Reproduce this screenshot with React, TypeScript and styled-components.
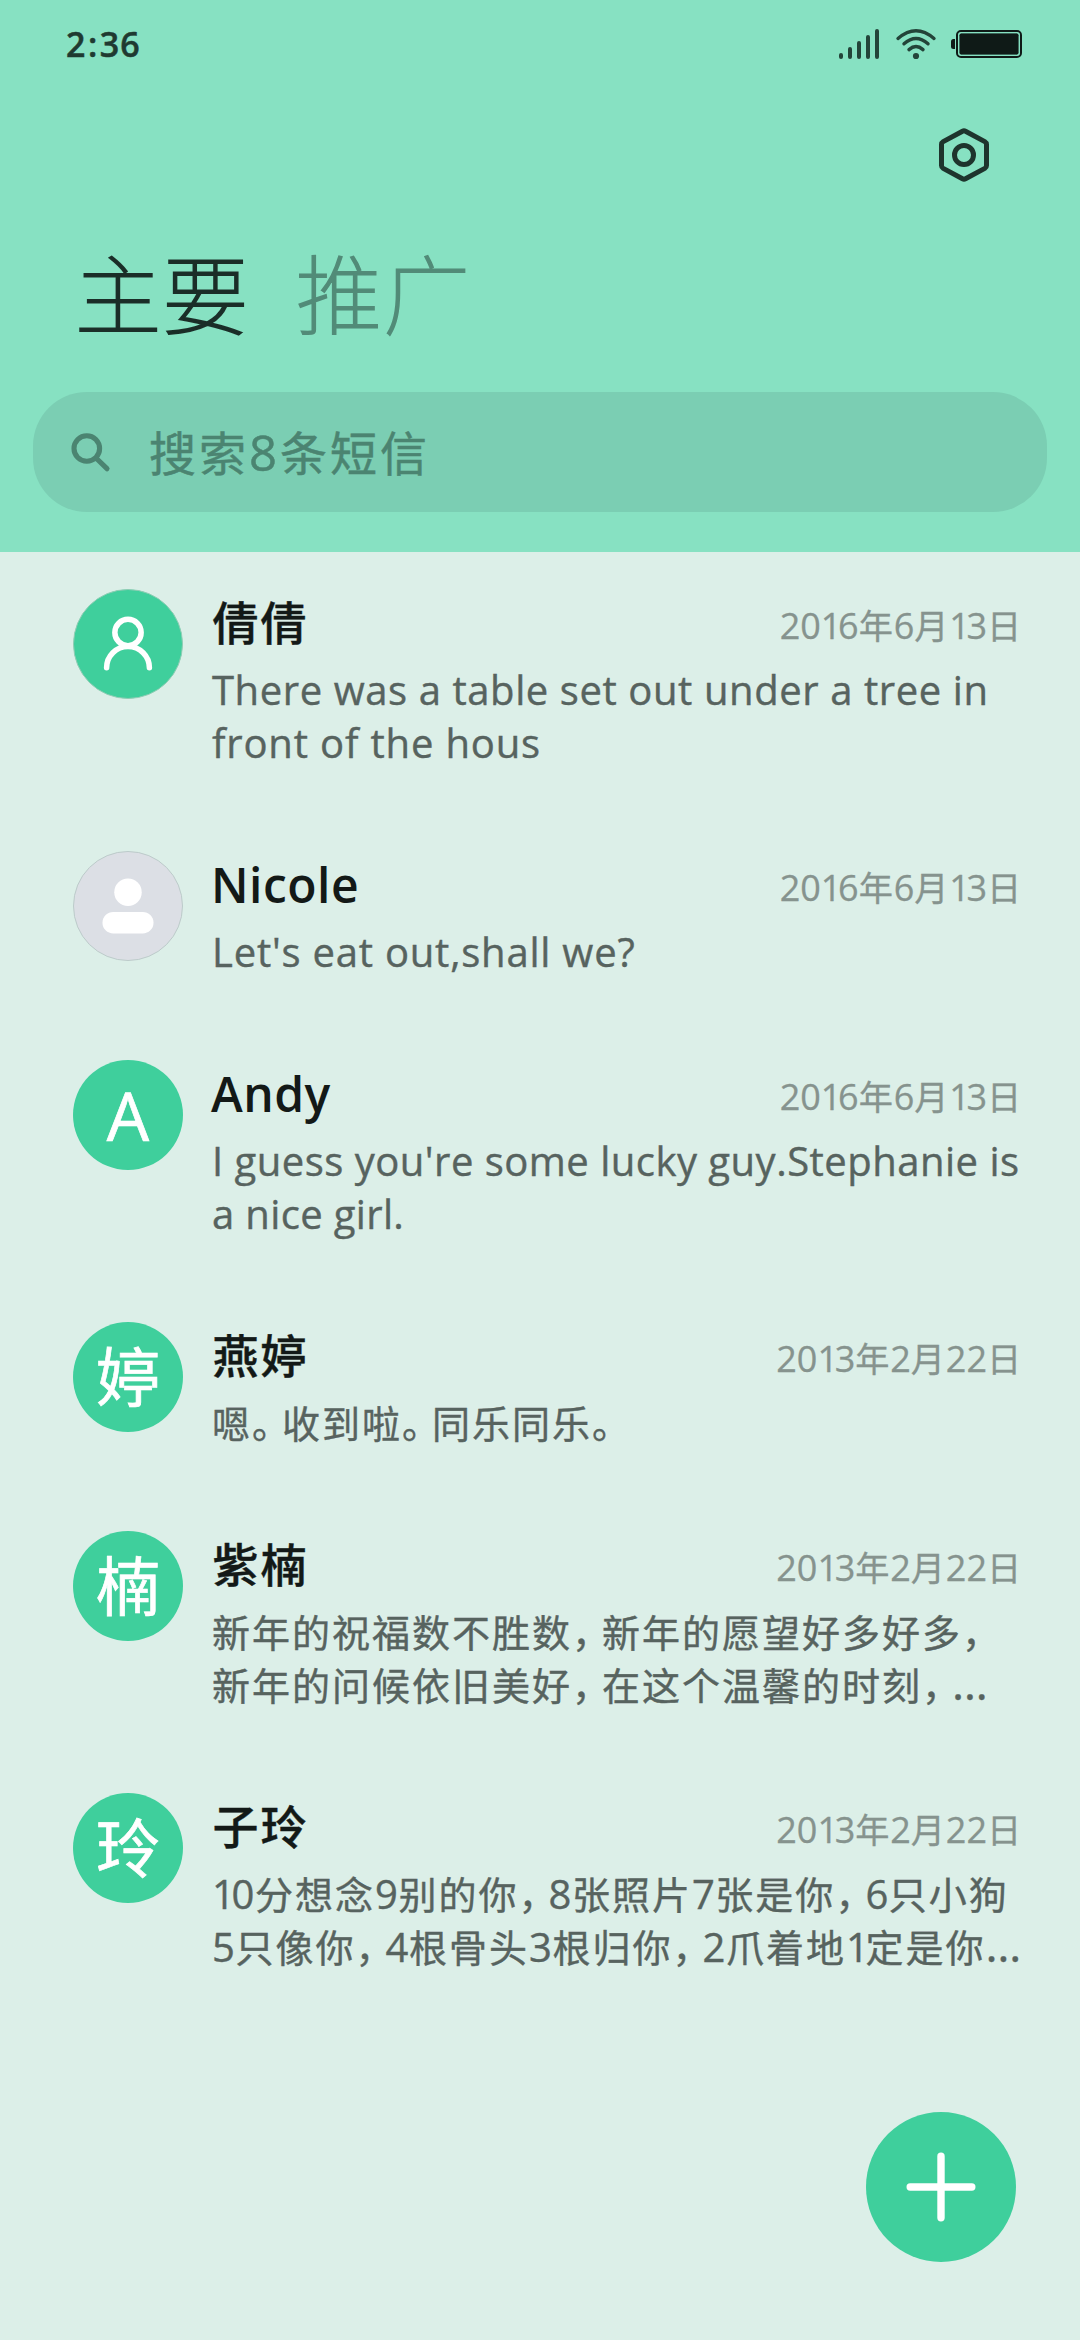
import React from "react";
import styled, { createGlobalStyle, css } from "styled-components";

const FONT = `"Open Sans", "Noto Sans CJK SC", sans-serif`;

const GlobalStyle = createGlobalStyle`
  body { margin: 0; background: #dcefe8; }
  * { box-sizing: border-box; }
`;

const Screen = styled.div`
  position: relative;
  width: 1080px;
  height: 2340px;
  overflow: hidden;
  background: #dcefe8;
  font-family: ${FONT};
`;

const Header = styled.header`
  display: flex;
  flex-direction: column;
  height: 552px;
  background: #87e1c2;
`;

const StatusBar = styled.div`
  display: flex;
  justify-content: space-between;
  align-items: center;
  height: 88px;
  padding: 0 58px 0 66px;
`;

const Clock = styled.span`
  font-size: 34px;
  line-height: 40px;
  font-weight: 600;
  letter-spacing: 1px;
  color: #1f3a31;
  -webkit-text-stroke: 0.5px currentColor;
`;

const Colon = styled.span`
  margin: 0 1.5px;
`;

const StatusIcons = styled.svg`
  display: block;
  width: 184px;
  height: 88px;
`;

const Toolbar = styled.div`
  display: flex;
  justify-content: flex-end;
  align-items: center;
  height: 134px;
  padding-right: 88px;
`;

const IconButton = styled.button`
  display: flex;
  padding: 0;
  border: 0;
  background: none;
`;

const Tabs = styled.nav`
  display: flex;
  gap: 46px;
  height: 170px;
  padding: 19px 0 0 75px;
`;

const Tab = styled.span<{ $active?: boolean }>`
  font-size: 86px;
  line-height: 108px;
  font-weight: 100;
  letter-spacing: 1.5px;
  color: ${(p) => (p.$active ? "#1b2e28" : "#528b78")};
  -webkit-text-stroke: 2px currentColor;
`;

const SearchBar = styled.div`
  display: flex;
  align-items: center;
  height: 120px;
  margin: 0 33px;
  padding-left: 36px;
  border-radius: 54px;
  background: #7bceb3;
`;

const SearchText = styled.span`
  margin-left: 38px;
  padding-top: 2px;
  font-size: 47px;
  line-height: 60px;
  letter-spacing: 3px;
  color: #4b8471;
  -webkit-text-stroke: 0.5px currentColor;
`;

const SearchCount = styled.span`
  font-size: 49px;
  line-height: 1;
`;

const List = styled.main`
  display: flex;
  flex-direction: column;
`;

const Row = styled.article`
  display: flex;
  gap: 29px;
  padding: 37px 58px 45px 73px;
`;

const Avatar = styled.div<{ $grey?: boolean; $outlined?: boolean; $latin?: boolean }>`
  display: flex;
  flex: none;
  align-items: center;
  justify-content: center;
  width: 110px;
  height: 110px;
  border-radius: 50%;
  background: ${(p) => (p.$grey ? "#dcdfe5" : "#3fcf9c")};
  color: #fff;
  font-size: ${(p) => (p.$latin ? 67 : 64)}px;
  line-height: 110px;
  -webkit-text-stroke: 0.7px currentColor;
  ${(p) =>
    p.$outlined &&
    css`
      border: 1.5px solid ${p.$grey ? "#bccbca" : "#8fcdb4"};
    `}
`;

const Body = styled.div`
  flex: 1;
  min-width: 0;
`;

const Head = styled.div`
  display: flex;
  justify-content: space-between;
  align-items: flex-start;
  height: 74px;
  padding-top: 4px;
`;

const Name = styled.span<{ $latin?: boolean }>`
  font-size: ${(p) => (p.$latin ? 48 : 46)}px;
  line-height: ${(p) => (p.$latin ? 60 : 58)}px;
  font-weight: ${(p) => (p.$latin ? 600 : 500)};
  letter-spacing: ${(p) => (p.$latin ? 0.5 : 2)}px;
  margin-left: ${(p) => (p.$latin ? -1 : 0.5)}px;
  color: #131917;
  -webkit-text-stroke: ${(p) => (p.$latin ? 0 : 0.4)}px currentColor;
`;

const Line = styled.p<{ $tracking?: number }>`
  margin: 0;
  font-size: 40px;
  line-height: 53px;
  height: 53px;
  letter-spacing: ${(p) => p.$tracking ?? 0.58}px;
  white-space: nowrap;
  color: #57635f;
  -webkit-text-stroke: 0.4px currentColor;
`;

const Han = styled.span`
  font-size: 0.95em;
  line-height: 1;
  letter-spacing: 2px;
`;

const Mark = styled(Han)`
  font-feature-settings: "halt";
  letter-spacing: 11px;
`;

const One = styled.span`
  letter-spacing: -3.4px;
`;

const Dots = styled.span`
  font-size: 46px;
  line-height: 1;
`;

const DateLabel = styled.time`
  padding-top: 3px;
  font-size: 36px;
  line-height: 60px;
  white-space: nowrap;
  color: #86938e;
  -webkit-text-stroke: 0.3px currentColor;

  ${Han} {
    letter-spacing: 0.8px;
  }
`;

const Fab = styled.button`
  position: absolute;
  right: 64px;
  bottom: 78px;
  display: flex;
  align-items: center;
  justify-content: center;
  width: 150px;
  height: 150px;
  padding: 0;
  border: 0;
  border-radius: 50%;
  background: #3fcf9c;
`;

/* Splits a line into runs so that Chinese text, its punctuation and digits get their own spacing. */
const renderRuns = (text: string) =>
  (text.match(/[\u4e00-\u9fff]+|[，。]|1|…|[^\u4e00-\u9fff，。1…]+/g) ?? []).map((run, i) => {
    if (/[\u4e00-\u9fff]/.test(run)) return <Han key={i}>{run}</Han>;
    if (/[，。]/.test(run)) return <Mark key={i}>{run}</Mark>;
    if (run === "1") return <One key={i}>{run}</One>;
    if (run === "…") return <Dots key={i}>{run}</Dots>;
    return <React.Fragment key={i}>{run}</React.Fragment>;
  });

const PersonOutline = () => (
  <svg width="110" height="110" viewBox="0 0 110 110" fill="none" stroke="#fff" strokeWidth="5.6" strokeLinecap="round">
    <circle cx="55" cy="43.3" r="13.4" />
    <path d="M33.2 79.3a21.8 21.8 0 0 1 43.6 0" />
  </svg>
);

const PersonSolid = () => (
  <svg width="110" height="110" viewBox="0 0 110 110" fill="#fff">
    <circle cx="55" cy="41" r="14" />
    <rect x="29" y="61" width="52" height="22" rx="11" />
  </svg>
);

interface MessageLine {
  text: string;
  tracking?: number;
}

interface Message {
  name: string;
  date: string;
  lines: MessageLine[];
  avatar: React.ReactNode;
  latin?: boolean;
  grey?: boolean;
  outlined?: boolean;
}

const messages: Message[] = [
  {
    name: "倩倩",
    date: "2016年6月13日",
    lines: [
      { text: "There was a table set out under a tree in" },
      { text: "front of the hous", tracking: 0.83 },
    ],
    avatar: <PersonOutline />,
    outlined: true,
  },
  {
    name: "Nicole",
    date: "2016年6月13日",
    lines: [{ text: "Let's eat out,shall we?", tracking: 0.78 }],
    avatar: <PersonSolid />,
    latin: true,
    grey: true,
    outlined: true,
  },
  {
    name: "Andy",
    date: "2016年6月13日",
    lines: [
      { text: "I guess you're some lucky guy.Stephanie is", tracking: 0.49 },
      { text: "a nice girl.", tracking: 0.35 },
    ],
    avatar: "A",
    latin: true,
  },
  { name: "燕婷", date: "2013年2月22日", lines: [{ text: "嗯。收到啦。同乐同乐。" }], avatar: "婷" },
  {
    name: "紫楠",
    date: "2013年2月22日",
    lines: [
      { text: "新年的祝福数不胜数，新年的愿望好多好多，" },
      { text: "新年的问候依旧美好，在这个温馨的时刻，…" },
    ],
    avatar: "楠",
  },
  {
    name: "子玲",
    date: "2013年2月22日",
    lines: [
      { text: "10分想念9别的你，8张照片7张是你，6只小狗" },
      { text: "5只像你，4根骨头3根归你，2爪着地1定是你…" },
    ],
    avatar: "玲",
  },
];

export default function App() {
  return (
    <>
      <GlobalStyle />
      <Screen>
        <Header>
          <StatusBar>
            <Clock>
              2<Colon>:</Colon>36
            </Clock>
            <StatusIcons viewBox="838 0 184 88" fill="none">
              <path
                d="M841 55v2M850 49v8M859 43v14M868 37v20M877 31v26"
                stroke="#234439"
                strokeWidth="4"
                strokeLinecap="round"
              />
              <g stroke="#234439" strokeWidth="3.4" strokeLinecap="round">
                <path d="M898 38.5q18-15.5 36 0" />
                <path d="M904 43.8q12-10.6 24 0" />
                <path d="M909 49.6q7-6 14 0" />
              </g>
              <circle cx="916" cy="56" r="3.1" fill="#234439" />
              <path d="M955 39v10h-1.5a2.5 2.5 0 0 1-2.5-2.5v-5a2.500 2.500 0 0 1 2.500-2.500z" fill="#0f1a17" />
              <rect x="957" y="31" width="64" height="26" rx="4" stroke="#0f1a17" strokeWidth="2" />
              <rect x="959.3" y="33.3" width="59.4" height="21.4" rx="2" fill="#0f1a17" />
              <rect x="958.7" y="32.7" width="60.6" height="22.6" rx="2.5" stroke="#87e1c2" strokeWidth="0.9" />
            </StatusIcons>
          </StatusBar>
          <Toolbar>
            <IconButton aria-label="settings">
              <svg width="56" height="60" viewBox="936 125 56 60" fill="none" stroke="#1e342d" strokeWidth="5" strokeLinejoin="round">
                <path d="M962.5 131.2q1.5-.8 3 0l19.3 10.4q1.7 1 1.7 2.9v21q0 1.9-1.7 2.9l-19.3 10.4q-1.5.8-3 0l-19.3-10.4q-1.7-1-1.7-2.9v-21q0-1.9 1.7-2.9z" />
                <circle cx="964" cy="155" r="9.5" />
              </svg>
            </IconButton>
          </Toolbar>
          <Tabs>
            <Tab $active>主要</Tab>
            <Tab>推广</Tab>
          </Tabs>
          <SearchBar>
            <svg width="42" height="42" viewBox="69 432 42 42" fill="none" stroke="#4b8471" strokeWidth="5.1" strokeLinecap="round">
              <circle cx="86.8" cy="449.5" r="12.8" />
              <path d="M96.5 459.5l10.5 10.2" />
            </svg>
            <SearchText>
              搜索<SearchCount>8</SearchCount>条短信
            </SearchText>
          </SearchBar>
        </Header>
        <List>
          {messages.map((m) => (
            <Row key={m.name}>
              <Avatar $grey={m.grey} $outlined={m.outlined} $latin={m.latin}>
                {m.avatar}
              </Avatar>
              <Body>
                <Head>
                  <Name $latin={m.latin}>{m.name}</Name>
                  <DateLabel>{renderRuns(m.date)}</DateLabel>
                </Head>
                {m.lines.map((line) => (
                  <Line key={line.text} $tracking={line.tracking}>
                    {renderRuns(line.text)}
                  </Line>
                ))}
              </Body>
            </Row>
          ))}
        </List>
        <Fab aria-label="new message">
          <svg width="78" height="78" viewBox="0 0 78 78" stroke="#fff" strokeWidth="7.4" strokeLinecap="round">
            <path d="M39 8.2v61.6M8.2 39h61.6" />
          </svg>
        </Fab>
      </Screen>
    </>
  );
}
